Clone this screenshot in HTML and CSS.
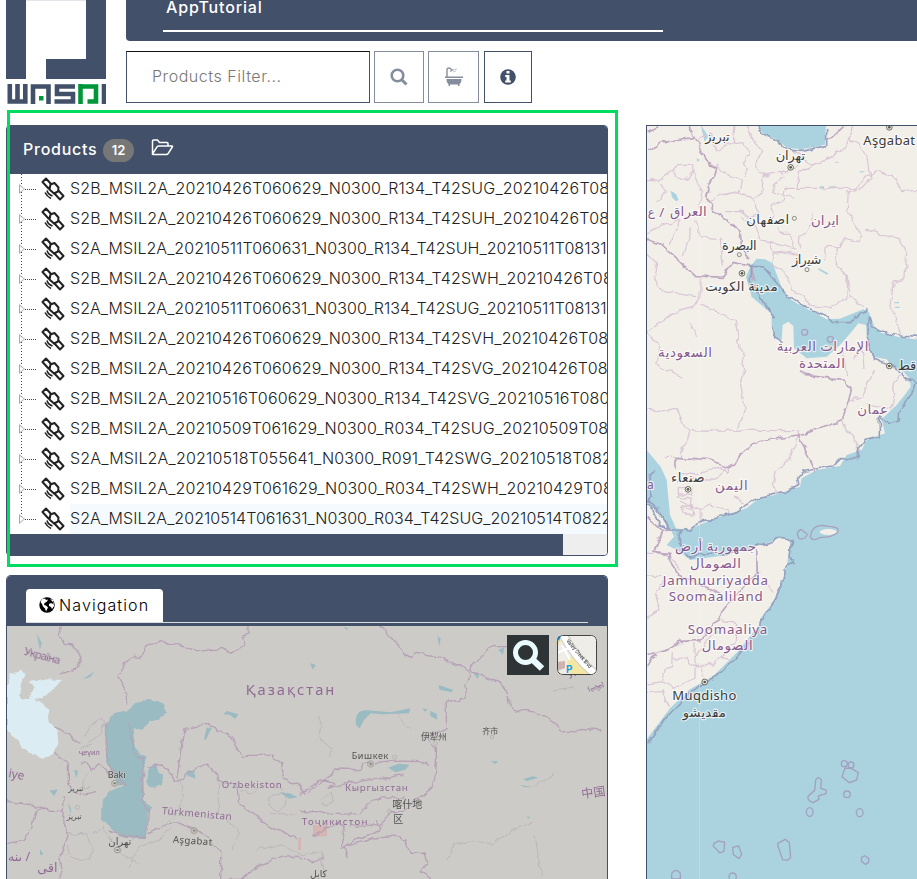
FILE: index.html
```html
<!DOCTYPE html>
<html lang="en">
<head>
<meta charset="utf-8">
<title>WASDI</title>
<link rel="stylesheet" href="styles.css">
</head>
<body>
<svg class="defs" aria-hidden="true">
  <filter id="rough" x="-5%" y="-5%" width="110%" height="110%" color-interpolation-filters="sRGB"><feTurbulence type="fractalNoise" baseFrequency=".035" numOctaves="2" seed="4"/><feDisplacementMap in="SourceGraphic" scale="20" xChannelSelector="R" yChannelSelector="G"/></filter>
  <symbol id="sat" viewBox="0 0 24 24"><g fill="#fff" stroke="#222" stroke-width="2" stroke-linejoin="round"><path d="M5 1.500 11 8 7.500 11.500 1.500 5zM16.500 12.500l6 6.500-3.500 3.500-6-6.500z"/><path d="m9.500 7.500 4-1.500 4 4.500-.500 4-4 2-4.500-4z"/><path d="M6 13.500q1 4 5.500 5.500M4 15.500q2 4 6 6" fill="none" stroke-width="1.600"/></g></symbol>
  <symbol id="city" viewBox="-12 -12 24 24"><circle cx="0" cy="0" r="8.500" fill="#f2efe9" stroke="#55564b" stroke-width="2.500"/><circle cx="0" cy="0" r="4" fill="#55564b"/></symbol>
</svg>
<div class="app">
  <header class="top">
    <svg class="logo" viewBox="6 0 100 104" width="100" height="104">
      <path fill="#435069" d="M6 0h20v79H6zM86 0h20v79H46V59h40z"/><path fill="#e3e5ea" d="M26 0h60v1H26z"/>
      <g fill="none" stroke="#435069" stroke-width="4.600"><path d="M9.800 84v17.500h15.500V84M17.500 84v17M33 104V86.500h15.500V104M75 86.500H57v7.500h16v7.500H54.500"/><path d="M104 84v20"/><path stroke="#009639" d="M80.500 84v20M78.500 86.500H96v15h-8.500"/></g>
      <path fill="#009639" d="M39 96h4.500v4.500H39z"/>
    </svg>
    <div class="top-main">
      <div class="titlebar"><div class="title">AppTutorial</div></div>
      <div class="filters">
        <div class="input">Products Filter...</div>
        <div class="btn b1"><svg width="18" height="18" viewBox="0 0 18 18"><circle cx="7.500" cy="7.500" r="5.800" fill="none" stroke="#848c9d" stroke-width="2.600"/><path d="m12 12 4.500 4.500" stroke="#848c9d" stroke-width="3"/></svg></div>
        <div class="btn b2"><svg width="20" height="20" viewBox="0 0 20 20"><path d="M3 10V3q0-2 2-2t2.500 2" fill="none" stroke="#848c9d" stroke-width="1.400"/><path d="m6 4 3-2 .5 1-3 2zM1 9.500h18V11H1zM2.500 12h15q0 4-2 5v2H14v-1.500H6V19H4.500v-2q-2-1-2-5z" fill="#848c9d"/><path d="m9 3 4-1M9 5l3-1" stroke="#c1c6cf"/></svg></div>
        <div class="btn b3"><svg width="16" height="16" viewBox="0 0 16 16"><circle cx="8" cy="8" r="7.800" fill="#435069"/><path fill="#fff" d="M6.500 2h3v2.500h-3zM5.200 6h4.300v5.500h1.300v2H5.200v-2h1.300V8H5.200z"/></svg></div>
      </div>
    </div>
  </header>
  <div class="body">
    <div class="left">
      <section class="products">
        <div class="phead"><span class="ptitle">Products</span><span class="badge">12</span><svg width="23" height="17" viewBox="0 0 23 17"><path d="M1.500 14V2q0-1 1-1h4l2 2.500h7.500q1 0 1 1V7M1.500 15 6 8q.5-1 2-1h13q1 0 .3 1l-3.800 6q-1 1.500-2 1.500H2q-1 0-.5-1" fill="none" stroke="#fff" stroke-width="1.500"/></svg></div>
        <ul class="tree">
          <li><i></i><svg class="sat"><use href="#sat"/></svg><span>S2B_MSIL2A_20210426T060629_N0300_R134_T42SUG_20210426T08</span></li>
          <li><i></i><svg class="sat"><use href="#sat"/></svg><span>S2B_MSIL2A_20210426T060629_N0300_R134_T42SUH_20210426T08</span></li>
          <li class="tight"><i></i><svg class="sat"><use href="#sat"/></svg><span>S2A_MSIL2A_20210511T060631_N0300_R134_T42SUH_20210511T08131</span></li>
          <li><i></i><svg class="sat"><use href="#sat"/></svg><span>S2B_MSIL2A_20210426T060629_N0300_R134_T42SWH_20210426T08</span></li>
          <li class="tight"><i></i><svg class="sat"><use href="#sat"/></svg><span>S2A_MSIL2A_20210511T060631_N0300_R134_T42SUG_20210511T08131</span></li>
          <li><i></i><svg class="sat"><use href="#sat"/></svg><span>S2B_MSIL2A_20210426T060629_N0300_R134_T42SVH_20210426T08</span></li>
          <li><i></i><svg class="sat"><use href="#sat"/></svg><span>S2B_MSIL2A_20210426T060629_N0300_R134_T42SVG_20210426T08</span></li>
          <li><i></i><svg class="sat"><use href="#sat"/></svg><span>S2B_MSIL2A_20210516T060629_N0300_R134_T42SVG_20210516T080</span></li>
          <li><i></i><svg class="sat"><use href="#sat"/></svg><span>S2B_MSIL2A_20210509T061629_N0300_R034_T42SUG_20210509T08</span></li>
          <li><i></i><svg class="sat"><use href="#sat"/></svg><span>S2A_MSIL2A_20210518T055641_N0300_R091_T42SWG_20210518T082</span></li>
          <li><i></i><svg class="sat"><use href="#sat"/></svg><span>S2B_MSIL2A_20210429T061629_N0300_R034_T42SWH_20210429T08</span></li>
          <li class="tight"><i></i><svg class="sat"><use href="#sat"/></svg><span>S2A_MSIL2A_20210514T061631_N0300_R034_T42SUG_20210514T0822</span></li>
        </ul>
        <div class="scroll"><div class="thumb"></div></div>
      </section>
      <section class="nav">
        <div class="nhead"><div class="tab"><svg width="16" height="16" viewBox="0 0 16 16"><circle cx="8" cy="8" r="7.700"/><path fill="#fff" d="m3 2 3-.5 1 1.500 2-.5-1 2-2.500 1.500-.5 2 2 .5 2 2-2 4-1-3-2-2L3 7 1.500 5zM11 2l3 3v2l-2-1-2 1v2l2 1 1 2 2-3-1-6z"/></svg><span>Navigation</span></div></div>
        <div class="minimap">
          <svg viewBox="21 -42 1800 759" width="600" height="253">
            <g fill="#9abbc1">
              <path class="coast" d="M328 240 345 218 380 212 405 190 445 180 492 190 498 218 475 240 450 246 425 268 398 272 408 320 420 340 440 355 430 380 432 480 448 495 452 505 440 520 440 598 385 595 355 588 330 560 303 540 305 480 320 470 345 440 375 438 350 425 335 400 318 350 318 290 314 255z"/><path class="coast" d="M442 380l28-5 15 30 4 30-30 5-20-8zM565 388l16 2-2 26-16-4z"/>
              <path d="m612 298 8-35 16 0-10 18-8 18zM670 222l10-9 35 10-10 14-15-12zM248 118l36-24-14 18zM148 452l25-4-10 20zM838 457l30 3 25 12-25 4zM222 390l12 2-4 22zM203 485l10 20v20zM110-20l15 30-5 20zM120 628l10 15-10 2zM1068 255q-5-48 35-44l68 6 60-12-4 15-80 3-35-3-20 20-13 25zM1267 205l16 3-8 7zM1290 213l20 8 2 18-20-10zM1165 383l30-12 33 3-12 15-30 8zM1312-12l10 8-4 24zM1495 30l18-8-4 22zM1420 100l18 3-4 14zM1315 135l44 14-4 8-36-8zM1470 364h24l-6 8zM1570 417l30-8 15 4-35 10zM1560 436l38 4-24 2zM1030-40l15 5-5 5zM930 70l18 5-10 14zM1580 530h12l-8 6z"/>
            </g>
            <path class="coast" fill="#dbedf2" d="M21 130 35 100 68 92 72 112 65 135 60 175 85 178 92 165 105 180 125 185 140 205 150 245 172 275 175 310 165 342 130 350 95 342 65 320 45 290 21 268z"/><path class="coast" fill="#dbedf2" d="M92 125 125 118 190 120 165 142 140 160 125 178 98 175 92 160 105 145z"/>
            <path fill="#d9a9a7" opacity=".7" d="M939 555h42v34h-42zM895 593h8v37h-8z"/>
            <g class="borders" stroke="#b6a1b5" stroke-width="4">
              <path d="m180-40-2 25 15 25 25 5 28 38-20 35-50 18M381 190l-5-40-22-40 30-50 22-15 15 8 20-30 45-20 55 10 50 22 75-10 25 15 43-20-10-30 20-8 0-30M165 262l38 18 40 32M21 485l60 8 50 15 55 6M21 610l48-8 30-40 12-50 25-5M165 340l40 30 0 60 18 25 20 10 45-10M240 370l20-5 15 30 20-20 25 20 15 20M190 465l-5 70 20 50-25 70 4 60M440 380l50-5 18 20 15 25 35 0M530 420l22-155 75-12 65 35 35 58 90 0 28 25 5 45 50 20 15 28M558 420l0-20 60-28 35 30 3 20 55 18 5 50 40 32 50 35 85 40M445 578l45-22 50-6 40 18 50 25 18 30 14 10 0 85 60 0 65-45 60-28 65 10 20 15 40-15M320 240l-4 30 5 80 16 40 40 50M388 245l-2 30 17 45 0 20 28 20-5 60 5 80 15 10-8 85-60-4-50-18"/>
              <path d="m1142-45 22 24 55 65 15 10 10-14 70 8 50 22 40 20 8 20-15 28-2 35-22 10-34 0 0 82-60 28 30 32 0 50-8 65-60 45-30 30-40 0-15 20-8 25-40-4-65-2M1408 88l65-68 65 0 42 0M1408 88l60 30 35 10 22 40 10 38 15 6 50 0 50 25 35 40 60-12 60 5M1288 377l-15-12-95-2-90 8-4 18-80-2-10 22-25 15-48 35M900 465l60-45 45 10-20 15 55-15 30-5 80-10 60-15M900 515l60 0 40 8 80-2 35-40 30-8 65-2M940 590l65-40 20 5 10 30-15 40 100-30 60-10 35 15 15 40 40 0 15 35-25 20 40 25M1125 540l15 30-15 10-60 20-30 20 10 40"/>
              <path stroke="#bbb2b9" stroke-width="2.500" d="m255 290 15-30 30-25 18 10-20 40-35 20M238 330l18-12 20-6M265 400l-18 20 8 30 18-8M200 580l60 5 20 35-10 40-55-5-10-40M280 580l25-20 20 35 30 20 12 30 50 25M380 680l40-60 60-20 35-35M540 420l10 50-15 40-40 50M655 430v90l60 50-15 60M720 450l35 10 30-20 65 5M770 630l70-15 65 30 60-10 10 80M800 470l50-10 10 35-30 20-20-20zM810 520l80 5M955 230l10 30-5 30 30 35 0 30M1190 220l40 50M1340 660l25-50 60-5 50 5 65-40 55-20M1605 585l20 130M960 480l30-25 10 30-40 5M1600 440l60-40M1665 150l60-10"/>
            </g>
            <g class="place mini">
              <text transform="translate(70 45) rotate(15)" font-size="34" textLength="112">Україна</text>
              <text x="737" y="165" font-size="44" textLength="266">Қазақстан</text>
              <text x="665" y="444" font-size="29" textLength="180">Oʻzbekiston</text>
              <text x="485" y="522" font-size="30" textLength="210" transform="rotate(5 485 522)">Türkmenistan</text>
              <text x="1035" y="452" font-size="29" textLength="188">Кыргызстан</text>
              <text x="905" y="556" font-size="29" textLength="197">Тоҷикистон</text>
              <text x="24" y="410" font-size="36" transform="rotate(10 16 410)">iye</text><text x="236" y="346" font-size="22">ҷеүил</text>
              <text x="24" y="662" font-size="38">ىنە / </text><text x="112" y="695" font-size="38">اقی</text>
              <text x="1746" y="475" font-size="36" transform="rotate(-8 1747 475)">中国</text><text x="1708" y="118" font-size="33" transform="rotate(-30 1708 118)">Улс</text><text x="1768" y="160" font-size="24" textLength="50" lengthAdjust="spacingAndGlyphs" transform="rotate(-20 1765 160)">ᠮᠣᠩᠭᠣᠯ</text>
              <g class="town">
                <text x="323" y="414" font-size="27">Bakı</text><text x="518" y="608" font-size="29" textLength="118" transform="rotate(4 518 608)">Aşgabat</text><text x="325" y="615" font-size="30">تهران</text><text x="205" y="453" font-size="23">تبریز</text><text x="200" y="538" font-size="23">تبریز</text>
                <text x="1055" y="357" font-size="27" textLength="110">Бишкек</text><text x="1263" y="301" font-size="26">伊犁州</text><text x="1447" y="281" font-size="24">齐市</text><text x="1177" y="505" font-size="30">喀什地</text><text x="1180" y="550" font-size="30">区</text><text x="930" y="710" font-size="28">کابل</text>
              </g>
            </g>
            <g opacity=".65"><use href="#city" x="332" y="418" width="24" height="24"/><use href="#city" x="340" y="618" width="24" height="24"/><use href="#city" x="570" y="560" width="24" height="24"/><use href="#city" x="1100" y="360" width="24" height="24"/></g>
            <g fill="none" stroke="#aaa" stroke-width="2"><circle cx="1168" cy="514" r="6"/><circle cx="1306" cy="311" r="6"/><circle cx="1476" cy="291" r="5"/><circle cx="1184" cy="352" r="6"/><circle cx="232" cy="502" r="6"/></g>
          </svg>
          <div class="tools">
            <svg width="42" height="40" viewBox="0 0 42 40"><path fill="#2e3336" d="M0 0h42v40H0z"/><circle cx="18.500" cy="17.500" r="10" fill="none" stroke="#e9fbff" stroke-width="5"/><path d="m26 25 9 8.500" stroke="#e9fbff" stroke-width="6.500"/></svg>
            <svg class="layers" width="40" height="40" viewBox="0 0 40 40"><rect width="40" height="40" fill="#efede7"/><path fill="#f4e6a5" d="m11 22 8 0 14 13-2 5H14q-5-9-3-18zM0 5h5L0 12z"/><path fill="#cfb4ae" d="M0 27l8-1v7l-8 3z"/><path d="M5-2q15 28 36 43" stroke="#c9c9c5" stroke-width="9" fill="none"/><path d="M5-2q15 28 36 43" fill="none" stroke="#fff" stroke-width="7"/><path d="m0 18 12-5M5 10l8 15M13 15l8 8" stroke="#fff" stroke-width="2"/><text x="9" y="38" font-size="10" font-weight="700" fill="#19a3dc">P</text><text transform="translate(9 6) rotate(50)" font-size="5.500" textLength="36" lengthAdjust="spacingAndGlyphs" font-weight="500" fill="#333">Valley Creek Blvd</text><path fill="#19a3dc" d="M0 1h4l-2 5-2-2z"/><rect x=".5" y=".5" width="39" height="39" rx="5" fill="none" stroke="#444"/></svg>
          </div>
        </div>
      </section>
      <div class="highlight"></div>
    </div>
    <div class="map">
      <svg viewBox="21 48 810 2259" width="270" height="753">
        <g fill="#f2efe9">
          <path d="M20 45H840V690L780 682 722 668 704 652 686 605 670 598 640 610 600 626 560 628 512 602 470 580 440 560 420 520 398 460 375 448 350 446 332 468 318 500 335 560 370 590 395 612 395 650 404 680 425 690 428 645 445 635 460 648 462 715 500 745 560 740 600 705 635 665 655 640 678 645 682 705 700 740 740 748 760 775 790 785 808 805 812 830 798 850 770 885 735 918 725 928 735 970 680 990 665 1020 620 1035 600 1068 530 1080 485 1105 480 1130 420 1150 350 1170 320 1195 240 1220 190 1240 145 1260 108 1255 90 1215 80 1110 62 1070 20 1020z"/>
          <path d="M20 1175 60 1215 90 1255 102 1280 80 1305 100 1315 125 1330 150 1350 240 1338 350 1308 400 1293 415 1284 440 1287 452 1300 443 1350 435 1390 400 1475 362 1525 358 1545 290 1628 220 1698 150 1738 90 1795 20 1888z"/>
          <ellipse cx="565" cy="1266" rx="26" ry="9"/>
        </g>
        <g fill="#aad3df"><path d="m350 45 20 26 45 20 25 22 45 5 70-14 3-59zM92 242l16 10 8 18-8 4-12-12zM182 45l14 20 8 15-10 15zM535 474l30 16-4 4-25-14zM540 229h12v7h-12zM568 229h18v6h-18zM655 185l20-2-8 5zM585 155l15 2-14 2zM763 576h14v4h-14zM765 590h14v4h-14zM170 145l10 5-8 5z"/></g>
        <g class="borders" stroke="#dac8d6" stroke-width="3.800">
          <path d="m20 208 38 2 35-25 15-20 50-3 5 18-28 34-30-10-5-22M60 210l20 35-25 30M165 175l0 30 20 40-8 50M230 165l20 20 55 30-8 30-55 10-30 15M175 90l35-20 20 50 50-25 35 8 10 25-15 30 15 22-10 20M285 45l-5 50M320 45l25 55 20 20-15 45 5 25 35 5M255 255l40-10 45 20 20 45-35 10-30-18-40 0M370 195l-5 55-20 15M365 200l30-15 25 0 15 15-35 25 5 25 60 12M405 185l40 0 30-20M395 345l10-30-15-30 40-15 5-35h190l25 0 20-30 40-25 50 20 25 45 60-5M475 238V185l75-30 50-30 30-40M440 110l85 55M640 45l-15 40 30 15 25 35 10 70-30 35-35 5-3 55 20 35 25 40-10 20-45-10-15 25-35 0-5 35M675 360l40 10 65 20 20 40-5 70-35 20-10 70 25 50 10 35M585 410l5 60 35 30 5 60 40 30M390 395l30 10 45 15-15-50-30 0-5-20M475 415l5-35 30-20 10-50M400 430l50-5 20 15 5 35M400 430l-10-35-30-5-20-50-35-15M400 430l-5 30 35 20 25 60 35 15 20 30 60 10 50-30 5-70M20 370l40-20 60-20-30 75M150 350l0 25-20 60M170 330l10 50 50 5M240 380l10 90M20 430l30 25-10 50 30 40 100 15M180 500l0 60-20 30-60 20-80 60M20 670l40 35-10 60 80 40M150 640l20 40M180 580l60 30 45 20 15 80 10 30 0 50M620 800l-10-70M640 740l30-20 5 60"/>
          <path d="M312 780 302 830 315 895 290 960M150 960 475 962V975M20 900 50 905 110 895 135 950 150 965 122 1030 122 1042 72 1042M475 980 460 1010 450 1050 405 1080 400 1130 425 1155M606 932 663 1022M628 870 668 860 680 825 700 780M680 880 752 900 765 860 760 820 785 790M120 1090 170 1095 240 1070 265 1090V1065M110 1115 160 1110 220 1110 260 1070M110 1160 155 1168 155 1195 120 1190M120 1170 180 1200 210 1185 265 1200 270 1220M285 1160 330 1190M180 1200 180 1245M115 1130h40v25h-40zM125 1185h35v30h-35zM20 1330H80L120 1380M20 1395 70 1397M75 1410 45 1450 60 1500 20 1525M225 1350V1390M350 1320 350 1390M240 1525 290 1540M380 1430 400 1450"/>
          <path d="M100 1630 98 1670 75 1675 68 1715 20 1722M20 1748 68 1745 85 1790M98 1650 140 1640 150 1662 215 1665 240 1640 270 1655M165 1600 165 1705 100 1735 68 1715M180 1662 195 1710M235 1530 290 1540 285 1600 240 1640M165 1640 200 1590 240 1560"/>
        </g>
        <g class="borders" stroke="#bea7c1" stroke-width="5">
          <path d="m20 125 40-25 45-10 60-8M20 65l35-15M150 45l5 30 20 25 15 35 20 30 20 8-8 30-15 20-10 40 20 20 5 20 55 35 20 30 5 40 30 40M20 387l40 15 105 95 80 5 35-45 55 15 8 40"/>
          <path stroke="#95a1be" d="m350 45 20 30 45 20 25 24 45 5 75-18 0-50M330 470l40 0 65 80 70 45 40 15 35 28 50 0 52-40M395 650l10 35 20 10M334 470l0 45 40 70 30 40M688 620l-6 70 18 55 40 15 35 20 25 30 20-5 5 15-10 35-40 50 0 25-25 10-32-20 0 58-42 10-20 25-5 33-50 0-20 22-85 15-30 20 5 25-40 20-80 15-60 45-115 30-25 20-55 5-35-15-20-50-20-20 15-20-10-50 15-30M20 1165 50 1197 90 1260M690 620l10 35 40 15 40 8 60 5"/>
          <path stroke="#95a1be" d="M120 1260 115 1295 130 1325 150 1342 180 1330 240 1335 350 1308 405 1292 415 1282 440 1284 455 1290 450 1340 460 1357 443 1365 435 1400 400 1480 362 1530 358 1560 300 1630 230 1700 150 1745 90 1810 20 1900"/>
          <path d="M480 785 500 797 612 808 634 842 606 932 475 978 527 1085M475 978 355 993 310 1020 285 1065 265 1070 200 1048 105 1042 105 1080M560 90l30-20 25-25M20 1220 68 1262 90 1260M68 1265 42 1325 90 1330 85 1350 115 1395 240 1450M350 1320 352 1390 300 1440 180 1592 120 1594 90 1615 20 1635M20 1670 45 1635"/>
        </g>
        <g fill="none" stroke="#a9a1c2" stroke-width="4"><path d="M472 1270q8-20 22-3 15 5 0 17-20 10-22-14zM515 1265q10-25 50-16 40 2 26 20-20 15-50 13-25 15-30-2z"/><circle cx="494" cy="667" r="9"/><circle cx="571" cy="688" r="9"/></g>
        <g fill="none" stroke="#a3a0c0" stroke-width="4" transform="translate(0 1470)">
          <circle cx="613" cy="491" r="9"/><circle cx="633" cy="495" r="9"/><path d="m615 504 20 2 20 12-5 22-22 8-22-18zM527 540q8-14 17 0l-2 25 16 5q5 14-12 14l-11 4 2 10-18 10q-20-8-14-20l19-17z"/><circle cx="621" cy="583" r="10"/><ellipse cx="509" cy="636" rx="10" ry="13"/><ellipse cx="659" cy="638" rx="10" ry="12"/><path d="m222 730 14-7 18 4-2 26-12 6-20-20zM278 742l18-4 9 25-8 13-17-12zM413 730l23-12 12 10 4 45-10 8-14-2-14-40zM664 773l10-6 12 8v12l-9 6-12-8zM95 837v-17q12-18 26 0v17z"/><circle cx="278" cy="830" r="11"/>
        </g>
        <path d="M178 45v2265" stroke="#fff" opacity=".3" stroke-width="2"/>
        <g class="place" font-size="40">
          <text x="513" y="344" textLength="84">ایران</text><text x="90" y="319" textLength="110">العراق</text><text x="58" y="322">/</text><text x="23" y="319" font-size="36">ع</text>
          <text x="54" y="740" textLength="162">السعودية</text><text x="410" y="724" textLength="275">الإمارات العربية</text><text x="477" y="775" textLength="138">المتحدة</text><text x="652" y="912" textLength="92">عمان</text><text x="225" y="1140" textLength="98">اليمن</text><text x="21" y="1137" font-size="36">a</text>
          <text x="105" y="1323" textLength="244">جمهورية أرض</text><text x="150" y="1374" textLength="153">الصومال</text><text x="68" y="1424" textLength="316">Jamhuuriyadda</text><text x="86" y="1473" textLength="282">Soomaaliland</text><text x="143" y="1571" textLength="239">Soomaaliya</text><text x="185" y="1620" textLength="153">الصومال</text>
          <g class="town" font-size="39"><text x="196" y="92" textLength="73">تبریز</text><text x="407" y="150" textLength="88">تهران</text><text x="670" y="106" textLength="155">Aşgabat</text><text x="319" y="341" textLength="128">اصفهان</text><text x="246" y="419" textLength="104">البصرة</text><text x="456" y="463" textLength="88">شیراز</text><text x="196" y="544" textLength="217">مدينة الكويت</text><text x="773" y="781" textLength="56" lengthAdjust="spacingAndGlyphs">قط</text><text x="93" y="1115" textLength="101">صنعاء</text><text x="97" y="1771" textLength="192">Muqdisho</text><text x="128" y="1820" textLength="130">مقديشو</text></g>
        </g>
        <g><use href="#city" x="440" y="160" width="24" height="24"/><use href="#city" x="736" y="40" width="24" height="24"/><use href="#city" x="294" y="478" width="24" height="24"/><use href="#city" x="736" y="756" width="24" height="24"/><use href="#city" x="132" y="1126" width="24" height="24"/><use href="#city" x="182" y="1704" width="24" height="24"/></g>
        <g fill="#f2efe9" stroke="#77786d" stroke-width="2.500"><circle cx="463" cy="325" r="6"/><circle cx="298" cy="434" r="6"/><circle cx="501" cy="479" r="6"/></g>
      </svg>
    </div>
  </div>
</div>
</body>
</html>
```

FILE: styles.css
```css
* { box-sizing: border-box; }
body { margin: 0; background: #fff; font-family: Inter, "Noto Sans", sans-serif; font-weight: 300; font-size: 16px; overflow: hidden; }
svg { display: block; flex: none; }
.defs { position: absolute; width: 0; height: 0; }
.app { width: 917px; height: 879px; overflow: hidden; padding-left: 6px; }
.top { display: flex; gap: 20px; height: 125px; }
.top-main { flex: 1; }
.titlebar { height: 41px; background: #435069; border-radius: 0 0 0 4px; padding-left: 37px; }
.title { width: 500px; height: 32px; border-bottom: 2px solid #fff; color: #fff; font-weight: 500; line-height: 15px; padding-left: 3px; letter-spacing: .85px; }
.filters { display: flex; padding-top: 10px; height: 62px; }
.input { width: 244px; border: 1px solid #435069; border-top-color: #111; padding-left: 25px; line-height: 49px; color: #777; letter-spacing: .55px; }
.btn { border: 1px solid #435069; display: flex; align-items: center; justify-content: center; }
.b1 { width: 50px; margin-left: 4px; border-color: #848c9d; }
.b2 { width: 51px; margin-left: 4px; border-color: #848c9d; }
.b3 { width: 48px; margin-left: 5px; }
.body { display: flex; gap: 38px; height: 754px; }
.left { width: 602px; position: relative; display: flex; flex-direction: column; gap: 19px; flex: none; }
.products { height: 431px; border: 1px solid #435069; border-radius: 4px; overflow: hidden; }
.phead { height: 48px; background: #435069; display: flex; align-items: center; padding: 0 0 3px 16px; color: #fff; }
.ptitle { width: 80px; font-weight: 500; letter-spacing: .75px; }
.badge { width: 31px; height: 23px; border-radius: 12px; background: #777; font-size: 13px; font-weight: 600; line-height: 23px; text-align: center; margin: 3px 17px 0 0; }
.phead svg { margin-top: -3px; }
.tree { list-style: none; margin: 0; padding: 0 0 0 12px; height: 360px; }
.tree li { height: 30px; display: flex; align-items: center; white-space: nowrap; color: #222; background: repeating-linear-gradient(#444 0 1px, #fff 1px 3px) 2px 0 / 1px 100% no-repeat; }
.tree li:last-child { background-size: 1px 15px; }
.tree i { flex: none; width: 18px; height: 1px; position: relative; background: repeating-linear-gradient(90deg, #444 0 1px, #fff 1px 2px); }
.tree i::before { content: ""; position: absolute; left: 0; top: -5px; border: 5px solid transparent; border-left: 6px solid #aaa; border-right: 0; }
.tree i::after { content: ""; position: absolute; left: 1px; top: -3px; border: 3px solid transparent; border-left: 4px solid #fff; border-right: 0; }
.sat { width: 24px; height: 24px; margin: 0 5px 0 4px; }
.tree span { line-height: 28px; height: 30px; letter-spacing: .18px; }
.tree .tight span { letter-spacing: .04px; }
.tree li:last-child span { background: #f5fafe; flex: 1; }
.scroll { height: 21px; background: #eee; }
.thumb { height: 21px; width: 556px; background: #435069; }
.nav { height: 304px; border: 1px solid #435069; border-bottom: 0; border-radius: 5px 5px 0 0; overflow: hidden; }
.nhead { height: 50px; background: #435069; padding: 13px 19px 0; }
.tab { height: 34px; width: 137px; background: #fff; border-radius: 4px 4px 0 0; display: flex; align-items: center; gap: 4px; padding: 0 0 2px 13px; color: #000; letter-spacing: 1.1px; }
.nhead::after { content: ""; display: block; height: 1px; background: #ddd; margin-top: -1px; }
.minimap { background: #cccbc8; position: relative; height: 253px; }
.tools { position: absolute; top: 9px; right: 10px; display: flex; gap: 8px; }
.layers { border-radius: 5px; }
.highlight { position: absolute; left: 1px; top: -15px; width: 611px; height: 457px; border: 3px solid #00dc5f; }
.map { flex: 1; border: 1px solid #435069; border-width: 1px 0 0 1px; background: #aad3df; overflow: hidden; }
.borders { fill: none; stroke-linejoin: round; filter: url(#rough); }
.coast { filter: url(#rough); }
.place { font-family: "Noto Sans", "DejaVu Sans", "Noto Sans CJK SC", sans-serif; font-weight: 400; fill: #86598b; stroke: #fff; stroke-opacity: .7; stroke-width: 7px; paint-order: stroke; stroke-linejoin: round; }
.place .town { fill: #3a3a3a; }
.mini { stroke: #cccbc8; stroke-width: 4px; opacity: .85; }
```
